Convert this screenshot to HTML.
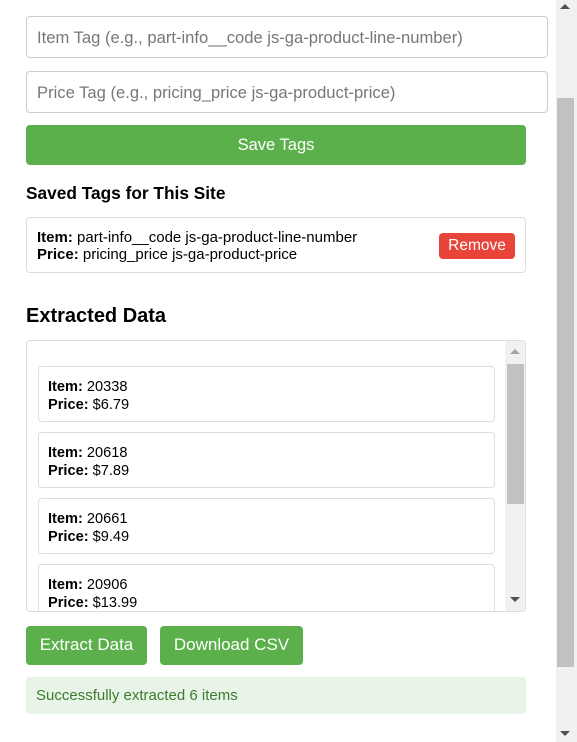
<!DOCTYPE html><html><head><style>
body{margin:0;width:577px;height:742px;overflow:hidden;background:#fff;font-family:"Liberation Sans",Arial,sans-serif;position:relative;color:#000}
.a{position:absolute;box-sizing:border-box}
.inp{left:26px;width:522px;height:42px;border:1px solid #ccc;border-radius:4px;color:#777;font-size:16.6px;padding:11px 10px}
.btn{background:#5cb04c;color:#fff;border-radius:4px;font-size:16.5px;text-align:center}
.it{left:11px;width:457px;height:56px;border:1px solid #ddd;border-radius:4px;font-size:14.6px;line-height:18px;padding:11px 9px}
</style></head><body>
<div class="a inp" style="top:16px">Item Tag (e.g., part-info__code js-ga-product-line-number)</div>
<div class="a inp" style="top:71px">Price Tag (e.g., pricing_price js-ga-product-price)</div>
<div class="a btn" style="left:26px;top:125px;width:500px;height:40px;line-height:40px">Save Tags</div>
<div class="a" style="left:26px;top:183px;font-size:17.3px;font-weight:bold">Saved Tags for This Site</div>
<div class="a" style="left:26px;top:217px;width:500px;height:56px;border:1px solid #ddd;border-radius:4px;font-size:15px;line-height:17px;padding:11px 10px"><b>Item:</b> part-info__code js-ga-product-line-number<br><b>Price:</b> pricing_price js-ga-product-price
<div class="a" style="left:412px;top:15px;width:76px;height:26px;background:#e8443a;color:#fff;border-radius:4px;text-align:center;line-height:26px;font-size:15.5px">Remove</div></div>
<div class="a" style="left:26px;top:305px;font-size:20px;font-weight:bold">Extracted Data</div>
<div class="a" style="left:26px;top:340px;width:500px;height:272px;border:1px solid #ddd;border-radius:4px;overflow:hidden">
<div class="a it" style="top:25px"><b>Item:</b> 20338<br><b>Price:</b> $6.79</div>
<div class="a it" style="top:91px"><b>Item:</b> 20618<br><b>Price:</b> $7.89</div>
<div class="a it" style="top:157px"><b>Item:</b> 20661<br><b>Price:</b> $9.49</div>
<div class="a it" style="top:223px"><b>Item:</b> 20906<br><b>Price:</b> $13.99</div>
<div class="a" style="left:478px;top:0;width:21px;height:270px;background:#f1f1f1"></div>
<div class="a" style="left:480px;top:23px;width:17px;height:140px;background:#c1c1c1"></div>
<div class="a" style="left:483px;top:8px;border:5px solid transparent;border-bottom:5px solid #a3a3a3;border-top:0"></div>
<div class="a" style="left:483px;top:256px;border:5px solid transparent;border-top:5px solid #505050;border-bottom:0"></div>
</div>
<div class="a btn" style="left:26px;top:626px;width:121px;height:39px;line-height:38px;font-size:17px">Extract Data</div>
<div class="a btn" style="left:160px;top:626px;width:143px;height:39px;line-height:38px;font-size:17px">Download CSV</div>
<div class="a" style="left:26px;top:677px;width:500px;height:37px;background:#e8f4e8;border-radius:4px;color:#3c7a2c;font-size:15px;line-height:37px;padding-left:10px">Successfully extracted 6 items</div>
<div class="a" style="left:556px;top:0;width:21px;height:742px;background:#f1f1f1"></div>
<div class="a" style="left:557px;top:98px;width:17px;height:569px;background:#c1c1c1"></div>
<div class="a" style="left:560px;top:4px;border:5px solid transparent;border-bottom:5px solid #505050;border-top:0"></div>
<div class="a" style="left:560px;top:731px;border:5px solid transparent;border-top:5px solid #505050;border-bottom:0"></div>
</body></html>
